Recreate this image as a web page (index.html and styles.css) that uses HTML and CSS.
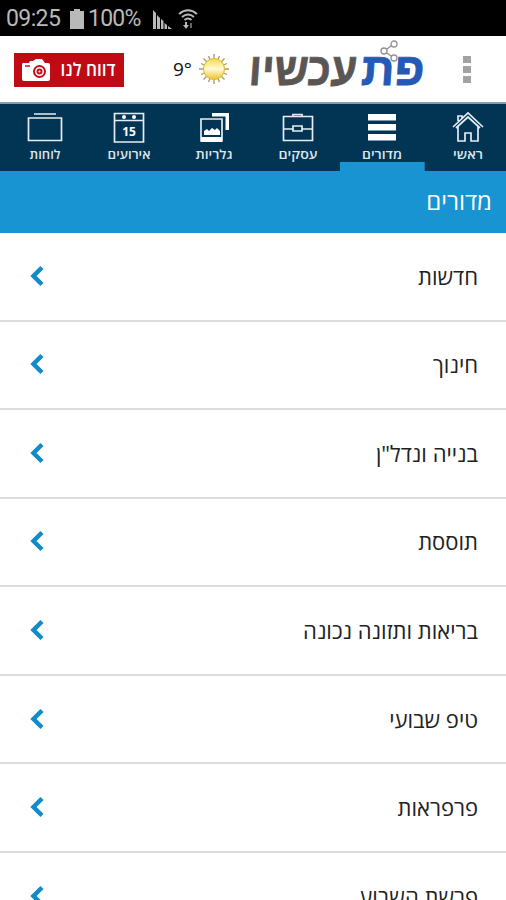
FILE: index.html
```html
<!DOCTYPE html>
<html lang="he" dir="rtl">
<head>
<meta charset="utf-8">
<title>פת עכשיו</title>
<link rel="stylesheet" href="styles.css">
</head>
<body>
<div class="status" dir="ltr">
  <span class="clock">09:25</span>
  <svg class="battery" width="14" height="20" viewBox="0 0 14 20"><path d="M4 0h6v2h4v18H0V2h4z" fill="#b9b9b9"/></svg>
  <span class="percent">100%</span>
  <svg class="signal" width="19" height="19" viewBox="0 0 19 19"><path d="M0 0l3 3v16H0zM4 5l3 3v11H4zM8 9l2.500 2v8H8zM11.500 13l2.500 2v4h-2.500zM15 16l4 3h-4z" fill="#b9b9b9"/></svg>
  <svg class="wifi" width="20" height="20" viewBox="0 0 20 20" fill="none" stroke="#b9b9b9" stroke-width="2"><path d="M1 5Q10-2.500 19 5M4 8Q10 3 16 8M6.500 11Q10 8 13.500 11"/><path d="M8 13v4"/><path d="M5 16h6l-3 4z" fill="#b9b9b9" stroke="none"/><path d="M13 14v5" stroke="#666"/></svg>
</div>
<header class="header" dir="ltr">
  <div class="report">
    <svg width="30" height="22" viewBox="0 0 30 22"><path d="M2 4h6l1-2h3l3-2h6l3 4h3q2 0 2 2v14q0 2-2 2H3q-2 0-2-2V6q0-2 1-2z" fill="#fff"/><path d="M4 7h5" stroke="#c3101a" stroke-width="1.500"/><circle cx="18.500" cy="12.500" r="5.500" fill="#fff" stroke="#c3101a" stroke-width="2"/><circle cx="18.500" cy="12.500" r="2" fill="none" stroke="#c3101a" stroke-width="2"/></svg>
    <svg class="report-label" width="62" height="34" viewBox="0 0 62 34"><text x="31" y="23" textLength="55" lengthAdjust="spacingAndGlyphs">דווח לנו</text></svg>
  </div>
  <span class="temp">9°</span>
  <svg class="sun" width="32" height="32" viewBox="-16 -16 32 32">
    <defs><linearGradient id="sun" x2="0" y2="1"><stop offset="0" stop-color="#f6d94f"/><stop offset=".5" stop-color="#fffbd0"/><stop offset="1" stop-color="#efc22e"/></linearGradient></defs>
    <path d="M0-15V15M-15 0H15M-10.500-10.500L10.500 10.500M-10.500 10.500L10.500-10.500M-5.500-13L5.500 13M5.500-13L-5.500 13M-13-5.500L13 5.500M-13 5.500L13-5.500" stroke="#aa9b60" stroke-width="1.300"/>
    <circle r="10.500" fill="url(#sun)" stroke="#dfb431"/>
  </svg>
  <svg class="logo" width="184" height="64" viewBox="-4 0 184 64">
    <g transform="translate(3 45.500) skewX(-4)"><text class="logo-gray" x="50" y="0" textLength="108" lengthAdjust="spacingAndGlyphs">עכשיו</text><text class="logo-blue" x="140" y="0" textLength="63" lengthAdjust="spacingAndGlyphs">פת</text></g>
    <g fill="#fff" stroke="#929292" stroke-width="1.300"><path d="M145 5l-10 7 10 7" fill="none"/><circle cx="145" cy="5" r="3"/><circle cx="135" cy="12" r="3"/><circle cx="145" cy="19" r="3"/></g>
  </svg>
  <div class="more"><i></i><i></i><i></i></div>
</header>
<nav class="nav">
  <div class="tab">
    <svg width="32" height="32" viewBox="0 0 32 32"><path d="M1 15L16 1l15 14M6 14v15h7v-8h6v8h7V14M6 9V4h4v2M4 16L16 5l12 11"/></svg>
    <svg class="label" width="60" height="18"><text x="30" y="12" textLength="30" lengthAdjust="spacingAndGlyphs">ראשי</text></svg>
  </div>
  <div class="tab active">
    <svg width="32" height="32" viewBox="0 0 32 32"><path class="solid" d="M2 2h28v6.500H2zM2 12h28v6.500H2zM2 22h28v6.500H2z"/></svg>
    <svg class="label" width="60" height="18"><text x="30" y="12" textLength="40" lengthAdjust="spacingAndGlyphs">מדורים</text></svg>
  </div>
  <div class="tab">
    <svg width="32" height="32" viewBox="0 0 32 32"><path d="M1.500 4.500h29v24h-29zM11 4V2.500h9V4M2 17h9M20 17h10M11 14h9v5h-9z"/></svg>
    <svg class="label" width="60" height="18"><text x="30" y="12" textLength="39" lengthAdjust="spacingAndGlyphs">עסקים</text></svg>
  </div>
  <div class="tab">
    <svg width="32" height="32" viewBox="0 0 32 32"><path d="M3 7h21v22H3z"/><path class="solid" d="M14 1h17v17h-3.500V4.500H14zM3 25h21v5H3zM6 23v-4l3-2 2 2 3-3 3 2 2-2 3 3v4z"/></svg>
    <svg class="label" width="60" height="18"><text x="30" y="12" textLength="37" lengthAdjust="spacingAndGlyphs">גלריות</text></svg>
  </div>
  <div class="tab">
    <svg width="32" height="32" viewBox="0 0 32 32"><path d="M1.500 1.500h29v28.500h-29zM2 8.500h28"/><circle class="solid" cx="11" cy="5" r="2"/><circle class="solid" cx="21" cy="5" r="2"/><text class="day" x="16" y="24">15</text></svg>
    <svg class="label" width="60" height="18"><text x="30" y="12" textLength="43" lengthAdjust="spacingAndGlyphs">אירועים</text></svg>
  </div>
  <div class="tab">
    <svg width="36" height="32" viewBox="0 0 36 32"><path d="M1.500 6h33v22.500h-33zM7 2h22"/></svg>
    <svg class="label" width="60" height="18"><text x="30" y="12" textLength="31" lengthAdjust="spacingAndGlyphs">לוחות</text></svg>
  </div>
</nav>
<h1 class="title">מדורים</h1>
<ul class="list">
  <li><span>חדשות</span><svg width="14" height="22" viewBox="0 0 14 22"><path d="M12 2.500L3.500 11l8.500 8.500"/></svg></li>
  <li><span>חינוך</span><svg width="14" height="22" viewBox="0 0 14 22"><path d="M12 2.500L3.500 11l8.500 8.500"/></svg></li>
  <li><span>בנייה ונדל"ן</span><svg width="14" height="22" viewBox="0 0 14 22"><path d="M12 2.500L3.500 11l8.500 8.500"/></svg></li>
  <li><span>תוססת</span><svg width="14" height="22" viewBox="0 0 14 22"><path d="M12 2.500L3.500 11l8.500 8.500"/></svg></li>
  <li><span>בריאות ותזונה נכונה</span><svg width="14" height="22" viewBox="0 0 14 22"><path d="M12 2.500L3.500 11l8.500 8.500"/></svg></li>
  <li><span>טיפ שבועי</span><svg width="14" height="22" viewBox="0 0 14 22"><path d="M12 2.500L3.500 11l8.500 8.500"/></svg></li>
  <li><span>פרפראות</span><svg width="14" height="22" viewBox="0 0 14 22"><path d="M12 2.500L3.500 11l8.500 8.500"/></svg></li>
  <li><span>פרשת השבוע</span><svg width="14" height="22" viewBox="0 0 14 22"><path d="M12 2.500L3.500 11l8.500 8.500"/></svg></li>
</ul>
</body>
</html>
```
FILE: styles.css
```css
* { box-sizing: border-box; }
html, body { height: 900px; overflow: hidden; }
body { margin: 0; background: #fff; color: #222; font-family: "Open Sans", "Noto Sans", "Liberation Sans", sans-serif; }
svg { display: block; flex: none; overflow: visible; }
text { text-anchor: middle; }

.status { height: 36px; background: #000; color: #b9b9b9; display: flex; align-items: center; padding: 2px 0 0 6px; font: 23px/34px Roboto, sans-serif; }
.clock { width: 64px; letter-spacing: -.6px; }
.percent { width: 65px; padding-left: 3px; letter-spacing: -.8px; }
.battery { margin-right: 1px; }
.signal { margin: 1px 6px 0 3px; }

.header { height: 68px; display: flex; align-items: center; padding-left: 14px; border-bottom: 2px solid #8e99a5; }
.report { width: 110px; height: 34px; background: #c00a14; display: flex; align-items: center; gap: 6px; padding-left: 7px; margin-top: 1px; }
.report-label text { font-size: 18px; font-weight: 600; fill: #fff; }
.temp { width: 25px; margin-left: 49px; color: #111; font-size: 19px; }
.logo { margin: 4px 0 0 15px; }
.logo text { font-family: "Liberation Sans", sans-serif; font-size: 46px; font-weight: 700; stroke-width: .8; }
.logo .logo-gray { fill: #5b5654; stroke: #5b5654; }
.logo .logo-blue { fill: #2459b5; stroke: #2459b5; }
.more { display: flex; flex-direction: column; gap: 3px; margin-left: 34px; margin-top: 1px; }
.more i { width: 8px; height: 7px; background: #a2a2a2; }

.nav { height: 67px; padding-left: 3px; background: #023453; display: grid; grid-template-columns: 81.500px repeat(5, 1fr); }
.tab { display: flex; flex-direction: column; align-items: center; padding-top: 8px; }
.tab:first-child { padding-left: 5px; }
.tab path { fill: none; stroke: #e5edf3; stroke-width: 1.700; }
.tab .solid { fill: #fff; stroke: none; }
.tab .label { margin-top: 3px; }
.label text { font-size: 12.500px; font-weight: 600; fill: #dce6ee; }
.day { font-size: 12px; font-weight: 700; fill: #fff; }
.active { background: linear-gradient(#1994d2, #1994d2) bottom / 100% 9px no-repeat; }

.title { height: 62px; margin: 0; padding-right: 14px; background: #1994d2; color: #fff; font-size: 24px; line-height: 60px; font-weight: 400; }

.list { margin: 0; padding: 0; list-style: none; }
.list li { height: 88.570px; padding: 0 28px 1px 30px; display: flex; align-items: center; justify-content: space-between; border-bottom: 2px solid #ddd; font-size: 22px; }
.list path { fill: none; stroke: #118bc9; stroke-width: 4.500; }
```
